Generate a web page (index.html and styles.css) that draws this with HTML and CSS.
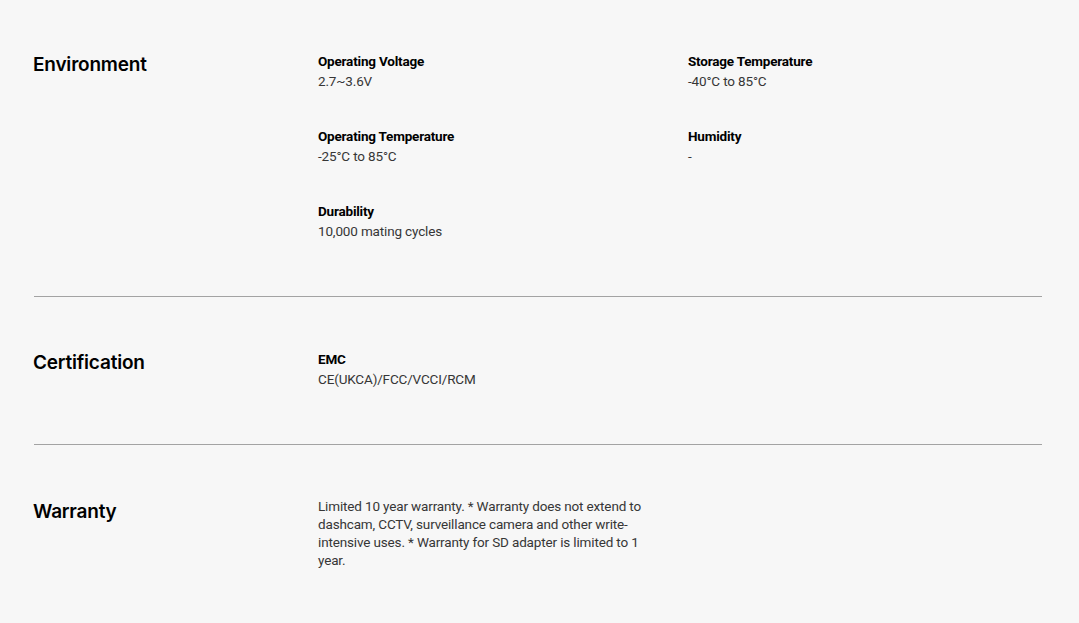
FILE: index.html
```html
<!DOCTYPE html>
<html lang="en">
<head>
<meta charset="utf-8">
<title>Specs</title>
<link rel="stylesheet" href="styles.css">
</head>
<body>
<div class="specs">
  <section class="spec-section">
    <h2 class="spec-title">Environment</h2>
    <div class="spec-grid">
      <div class="spec-item"><div class="spec-label">Operating Voltage</div><div class="spec-value">2.7~3.6V</div></div>
      <div class="spec-item"><div class="spec-label">Storage Temperature</div><div class="spec-value">-40°C to 85°C</div></div>
      <div class="spec-item"><div class="spec-label">Operating Temperature</div><div class="spec-value">-25°C to 85°C</div></div>
      <div class="spec-item"><div class="spec-label">Humidity</div><div class="spec-value">-</div></div>
      <div class="spec-item"><div class="spec-label">Durability</div><div class="spec-value">10,000 mating cycles</div></div>
    </div>
  </section>
  <section class="spec-section">
    <h2 class="spec-title">Certification</h2>
    <div class="spec-grid">
      <div class="spec-item"><div class="spec-label">EMC</div><div class="spec-value">CE(UKCA)/FCC/VCCI/RCM</div></div>
    </div>
  </section>
  <section class="spec-section last">
    <h2 class="spec-title warranty-title">Warranty</h2>
    <div class="spec-grid">
      <div class="spec-item"><div class="spec-value warranty">Limited 10 year warranty. * Warranty does not extend to dashcam, CCTV, surveillance camera and other write-intensive uses. * Warranty for SD adapter is limited to 1 year.</div></div>
    </div>
  </section>
</div>
</body>
</html>
```
FILE: styles.css
```css
html, body {
  margin: 0;
  padding: 0;
  background: #f7f7f7;
}
body {
  font-family: Roboto, "Liberation Sans", sans-serif;
  color: #000;
}
.specs {
  margin: 0 37px 0 34px;
}
.spec-section {
  display: grid;
  grid-template-columns: 284px 1fr;
  padding: 51px 0 55px;
  border-bottom: 1px solid #a3a3a3;
}
.spec-section + .spec-section {
  padding-top: 52px;
}
.spec-section.last {
  border-bottom: none;
}
.spec-title {
  margin: 1px 0 0 -1px;
  font-family: Inter, "Open Sans", sans-serif;
  font-weight: 600;
  font-size: 19px;
  line-height: 26px;
  letter-spacing: -0.2px;
  color: #000;
}
.warranty-title {
  margin-top: 2px;
}
.spec-grid {
  display: grid;
  grid-template-columns: 370px 1fr;
  row-gap: 35px;
  align-content: start;
}
.spec-item {
  display: flex;
  flex-direction: column;
}
.spec-label {
  font-size: 13.5px;
  font-weight: 700;
  line-height: 20px;
  color: #000;
  letter-spacing: -0.2px;
}
.spec-value {
  font-size: 13.5px;
  line-height: 20px;
  color: #363636;
  letter-spacing: -0.15px;
}
.spec-value.warranty {
  line-height: 18px;
  max-width: 340px;
}
```
